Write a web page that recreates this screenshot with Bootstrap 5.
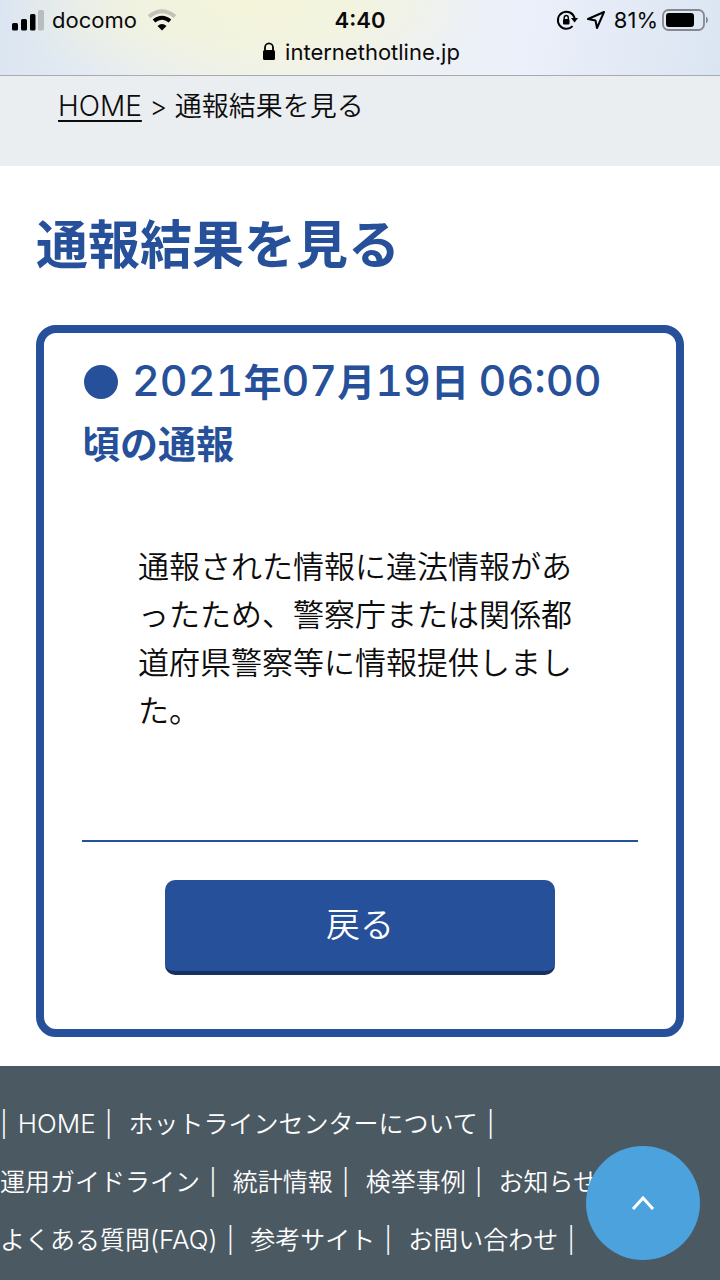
<!DOCTYPE html>
<html lang="ja">
<head>
<meta charset="utf-8">
<meta name="viewport" content="width=device-width, initial-scale=1">
<title>通報結果を見る</title>
<link href="https://cdn.jsdelivr.net/npm/bootstrap@5.3.0/dist/css/bootstrap.min.css" rel="stylesheet">
<style>
  :root { --ihc-blue: #26509a; --ihc-ink: #0c0c0c; }
  body { font-family: Inter, "Noto Sans CJK JP", sans-serif; font-weight: 350; color: var(--ihc-ink); background: #fff; }
  .browser-bar {
    background:
      radial-gradient(ellipse 34% 130% at 34% 0, #f4f4da 0%, rgba(244, 244, 218, .75) 45%, rgba(244, 244, 218, 0) 100%),
      linear-gradient(100deg, #dbe5f1 0%, #e7edf3 20%, #eff2ef 40%, #ecf0fa 72%, #dbe5f2 100%);
    border-bottom: 1px solid #a9abaf; padding: 6px 11px 8px; font-weight: 400; color: #0a0a0a;
  }
  .status-row { font-size: 22px; line-height: 28px; }
  .status-row > div { flex: 1 1 0; }
  .clock { font-weight: 600; }
  .address { font-size: 22px; line-height: 30px; padding-top: 3px; }
  .crumbs { background: #ebeef1; padding: 10px 58px 39px; font-size: 27px; line-height: 40px; }
  .crumbs a { font-size: 28px; font-weight: 300; color: inherit; text-decoration-thickness: 2px; text-underline-offset: 4px; }
  .page-title { color: var(--ihc-blue); font-size: 52px; line-height: 72px; font-weight: 700; margin: 0 0 43px; }
  main { padding: 44px 36px 29px; }
  .report-box { border: 8px solid var(--ihc-blue); border-radius: 20px; padding: 16px 38px 54px; }
  .report-title { color: var(--ihc-blue); font-size: 38px; line-height: 62px; font-weight: 600; margin: 0; }
  .report-title .figures { font-size: 43px; font-weight: 500; font-variant-numeric: tabular-nums; }
  .dot { width: 34px; height: 34px; margin: 0 14px 8px 2px; background: var(--ihc-blue); vertical-align: middle; }
  .report-text { font-size: 31px; line-height: 48px; margin: 68px 56px 105px; }
  .rule { border-top: 2px solid var(--ihc-blue); opacity: 1; margin: 0 0 38px; }
  .back-btn, .back-btn:hover {
    width: 70%; background: var(--ihc-blue); color: #fff; border: 0; border-bottom: 4px solid #17305f;
    border-radius: 10px; font-size: 34px; font-weight: 350; line-height: 48px; padding: 21px 12px 22px;
  }
  footer { background: #4b5962; color: #fff; padding: 29px 16px 12px 0; font-size: 25px; line-height: 58px; }
  footer li { white-space: nowrap; padding-right: 16px; }
  footer a { color: inherit; text-decoration: none; }
  .latin { font-size: 26px; font-weight: 300; }
  .bar { margin-left: 9px; font-weight: 300; }
  .bar-first { margin-right: 10px; font-weight: 300; }
  .to-top { width: 114px; height: 114px; right: 20px; bottom: 20px; background: #4ca2dc; }
</style>
</head>
<body>
<header class="browser-bar">
  <div class="status-row d-flex align-items-center">
    <div class="d-flex align-items-center gap-2">
      <svg width="33" height="21" viewBox="0 0 33 21" aria-hidden="true"><rect x="1" y="13" width="6" height="7.500" rx="1.500"/><rect x="10" y="9" width="6" height="11.500" rx="1.500"/><rect x="19" y="4" width="5.500" height="16.500" rx="1.500"/><rect x="27" y="0" width="6" height="20.500" rx="1.500" fill="#b9bdbf"/></svg>
      <span>docomo</span>
      <svg width="32" height="22" viewBox="-2 0 32 22" fill="none" aria-hidden="true"><path d="M2 7.500Q15-3 28 7.500" stroke="#c0c4ba" stroke-width="4"/><path d="M7 12Q15 5.500 23 12" stroke="#000" stroke-width="4"/><path d="M10.500 17Q15 13 19.500 17L15 21.500z" fill="#000"/></svg>
    </div>
    <span class="clock">4:40</span>
    <div class="d-flex align-items-center justify-content-end">
      <svg width="22" height="22" viewBox="0 0 22 22" fill="none" stroke="#000" stroke-width="2" aria-hidden="true"><path d="M16.600 17.100A8.500 8.500 0 1 1 18.600 9"/><path d="M15 9h7l-3.400 4.500z" fill="#000" stroke="none"/><rect x="7" y="10" width="6.500" height="5.500" rx="1" fill="#000" stroke="none"/><path d="M8.200 10.500V8.800a2.050 2.300 0 0 1 4.100 0v1.700" stroke-width="1.400"/></svg>
      <svg class="ms-2" width="20" height="20" viewBox="0 0 20 20" fill="none" stroke="#000" stroke-width="2" stroke-linejoin="round" aria-hidden="true"><path d="M18 2 2 9l7.500 1.500L11 18z"/></svg>
      <span class="ms-2">81%</span>
      <svg class="ms-1" width="47" height="22" viewBox="0 0 47 22" aria-hidden="true"><rect x="1" y="1" width="41" height="20" rx="5.500" fill="none" stroke="#85888e" stroke-width="1.800"/><rect x="4" y="4" width="28" height="14" rx="3"/><path d="M44 7.500q2 1 2 3.500t-2 3.500z" fill="#85888e"/></svg>
    </div>
  </div>
  <div class="address d-flex align-items-center justify-content-center">
    <svg class="me-2" width="17" height="20" viewBox="0 0 17 20" aria-hidden="true"><rect x="3" y="8" width="12" height="10" rx="1.500"/><path d="M5 9V5.500a4 4.200 0 0 1 8 0V9" fill="none" stroke="#000" stroke-width="1.800"/></svg>
    <span>internethotline.jp</span>
  </div>
</header>

<nav class="crumbs" aria-label="パンくずリスト"><a href="#">HOME</a> &gt; 通報結果を見る</nav>

<main>
  <h1 class="page-title">通報結果を見る</h1>
  <section class="report-box">
    <h2 class="report-title"><span class="dot d-inline-block rounded-circle"></span><span class="figures">2021</span>年<span class="figures">07</span>月<span class="figures">19</span>日 <span class="figures">06:00</span><br>頃の通報</h2>
    <p class="report-text">通報された情報に違法情報があったため、警察庁または関係都道府県警察等に情報提供しました。</p>
    <hr class="rule">
    <div class="text-center"><button type="button" class="btn back-btn">戻る</button></div>
  </section>
</main>

<footer>
  <ul class="list-unstyled d-flex flex-wrap mb-0">
    <li><span class="bar-first">|</span><a class="latin" href="#">HOME</a><span class="bar">|</span></li>
    <li><a href="#">ホットラインセンターについて</a><span class="bar">|</span></li>
    <li><a href="#">運用ガイドライン</a><span class="bar">|</span></li>
    <li><a href="#">統計情報</a><span class="bar">|</span></li>
    <li><a href="#">検挙事例</a><span class="bar">|</span></li>
    <li><a href="#">お知らせ</a><span class="bar">|</span></li>
    <li><a href="#">よくある質問<span class="latin">(FAQ)</span></a><span class="bar">|</span></li>
    <li><a href="#">参考サイト</a><span class="bar">|</span></li>
    <li><a href="#">お問い合わせ</a><span class="bar">|</span></li>
  </ul>
</footer>

<a href="#" class="to-top position-fixed rounded-circle d-flex align-items-center justify-content-center" aria-label="ページの先頭へ">
  <svg width="24" height="16" viewBox="0 0 24 16" fill="none" stroke="#fff" stroke-width="3" aria-hidden="true"><path d="M2 14 12 3l10 11"/></svg>
</a>
<script src="https://cdn.jsdelivr.net/npm/bootstrap@5.3.0/dist/js/bootstrap.bundle.min.js"></script>
</body>
</html>
